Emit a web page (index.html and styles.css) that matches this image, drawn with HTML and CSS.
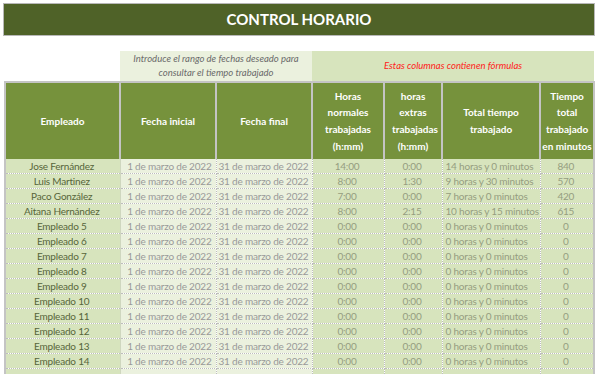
FILE: index.html
```html
<!DOCTYPE html>
<html lang="es">
<head>
<meta charset="utf-8">
<title>Control horario</title>
<link rel="stylesheet" href="styles.css">
</head>
<body>
<div class="sheet">
  <h1 class="title">CONTROL HORARIO</h1>
  <table class="grid">
    <colgroup>
      <col class="c-emp"><col class="c-date"><col class="c-date"><col class="c-hn"><col class="c-he"><col class="c-tot"><col class="c-min">
    </colgroup>
    <thead>
      <tr class="notes">
        <td class="blank"></td>
        <td class="note-input" colspan="2">Introduce el rango de fechas deseado para consultar el tiempo trabajado</td>
        <td class="note-formula" colspan="4">Estas columnas contienen fórmulas</td>
      </tr>
      <tr class="heads">
        <th>Empleado</th>
        <th>Fecha inicial</th>
        <th>Fecha final</th>
        <th class="narrow">Horas normales trabajadas (h:mm)</th>
        <th class="narrow">horas extras trabajadas (h:mm)</th>
        <th>Total tiempo trabajado</th>
        <th>Tiempo total trabajado en&nbsp;minutos</th>
      </tr>
    </thead>
    <tbody>
      <tr><td class="emp">Jose Fernández</td><td class="date">1 de marzo de 2022</td><td class="date">31 de marzo de 2022</td><td class="f">14:00</td><td class="f">0:00</td><td class="f tot">14 horas y 0 minutos</td><td class="f">840</td></tr>
      <tr><td class="emp">Luis Martinez</td><td class="date">1 de marzo de 2022</td><td class="date">31 de marzo de 2022</td><td class="f">8:00</td><td class="f">1:30</td><td class="f tot">9 horas y 30 minutos</td><td class="f">570</td></tr>
      <tr><td class="emp">Paco González</td><td class="date">1 de marzo de 2022</td><td class="date">31 de marzo de 2022</td><td class="f">7:00</td><td class="f">0:00</td><td class="f tot">7 horas y 0 minutos</td><td class="f">420</td></tr>
      <tr><td class="emp">Aitana Hernández</td><td class="date">1 de marzo de 2022</td><td class="date">31 de marzo de 2022</td><td class="f">8:00</td><td class="f">2:15</td><td class="f tot">10 horas y 15 minutos</td><td class="f">615</td></tr>
      <tr><td class="emp">Empleado 5</td><td class="date">1 de marzo de 2022</td><td class="date">31 de marzo de 2022</td><td class="f">0:00</td><td class="f">0:00</td><td class="f tot">0 horas y 0 minutos</td><td class="f">0</td></tr>
      <tr><td class="emp">Empleado 6</td><td class="date">1 de marzo de 2022</td><td class="date">31 de marzo de 2022</td><td class="f">0:00</td><td class="f">0:00</td><td class="f tot">0 horas y 0 minutos</td><td class="f">0</td></tr>
      <tr><td class="emp">Empleado 7</td><td class="date">1 de marzo de 2022</td><td class="date">31 de marzo de 2022</td><td class="f">0:00</td><td class="f">0:00</td><td class="f tot">0 horas y 0 minutos</td><td class="f">0</td></tr>
      <tr><td class="emp">Empleado 8</td><td class="date">1 de marzo de 2022</td><td class="date">31 de marzo de 2022</td><td class="f">0:00</td><td class="f">0:00</td><td class="f tot">0 horas y 0 minutos</td><td class="f">0</td></tr>
      <tr><td class="emp">Empleado 9</td><td class="date">1 de marzo de 2022</td><td class="date">31 de marzo de 2022</td><td class="f">0:00</td><td class="f">0:00</td><td class="f tot">0 horas y 0 minutos</td><td class="f">0</td></tr>
      <tr><td class="emp">Empleado 10</td><td class="date">1 de marzo de 2022</td><td class="date">31 de marzo de 2022</td><td class="f">0:00</td><td class="f">0:00</td><td class="f tot">0 horas y 0 minutos</td><td class="f">0</td></tr>
      <tr><td class="emp">Empleado 11</td><td class="date">1 de marzo de 2022</td><td class="date">31 de marzo de 2022</td><td class="f">0:00</td><td class="f">0:00</td><td class="f tot">0 horas y 0 minutos</td><td class="f">0</td></tr>
      <tr><td class="emp">Empleado 12</td><td class="date">1 de marzo de 2022</td><td class="date">31 de marzo de 2022</td><td class="f">0:00</td><td class="f">0:00</td><td class="f tot">0 horas y 0 minutos</td><td class="f">0</td></tr>
      <tr><td class="emp">Empleado 13</td><td class="date">1 de marzo de 2022</td><td class="date">31 de marzo de 2022</td><td class="f">0:00</td><td class="f">0:00</td><td class="f tot">0 horas y 0 minutos</td><td class="f">0</td></tr>
      <tr><td class="emp">Empleado 14</td><td class="date">1 de marzo de 2022</td><td class="date">31 de marzo de 2022</td><td class="f">0:00</td><td class="f">0:00</td><td class="f tot">0 horas y 0 minutos</td><td class="f">0</td></tr>
      <tr class="empty"><td class="emp"></td><td class="date"></td><td class="date"></td><td class="f"></td><td class="f"></td><td class="f tot"></td><td class="f"></td></tr>
    </tbody>
  </table>
</div>
</body>
</html>
```
FILE: styles.css
```css
html, body {
  margin: 0;
  padding: 0;
  background: #ffffff;
}
body {
  font-family: Lato, "Open Sans", sans-serif;
  font-size: 10px;
  overflow: hidden;
}
.sheet {
  padding: 3px 0 0 3px;
  width: 592px;
}
.title {
  margin: 0;
  height: 31px;
  line-height: 31px;
  background: #4f6228;
  border: 1px solid #b8b8b8;
  color: #ffffff;
  font-size: 15px;
  font-weight: 700;
  text-align: center;
}
.grid {
  margin-top: 15px;
  margin-left: 1px;
  border-collapse: collapse;
  table-layout: fixed;
  width: 589px;
}
.c-emp { width: 115px; }
.c-date { width: 96px; }
.c-hn { width: 72px; }
.c-he { width: 58px; }
.c-tot { width: 98px; }
.c-min { width: 54px; }

.notes td {
  height: 30px;
  padding: 0 6px;
  font-style: italic;
  font-size: 9.5px;
  text-align: center;
  line-height: 14px;
}
.notes .blank { background: #ffffff; }
.note-input {
  background: #ebf1de;
  color: #6a6a6a;
}
.note-formula {
  background: #d7e4bd;
  color: #ff1a1a;
}
.heads th {
  background: #76923c;
  color: #ffffff;
  font-weight: 700;
  font-size: 10px;
  line-height: 16.6px;
  height: 76px;
  padding: 0;
  border: 2px solid #c4c4c4;
  border-bottom: 0;
  vertical-align: middle;
}
.heads th.narrow { padding: 0 7px; }
tbody td {
  height: 14px;
  padding: 0 4px 0 2px;
  line-height: 14px;
  white-space: nowrap;
  overflow: hidden;
  letter-spacing: -0.2px;
  border-bottom: 1px dotted #bdbdbd;
  border-right: 1px dotted #bdbdbd;
}
tbody td:first-child { border-left: 2px solid #c4c4c4; }
tbody td:last-child { border-right: 2px solid #c4c4c4; }
.emp {
  background: #d7e4bd;
  color: #56653a;
  text-align: center;
  border-right: 1px solid #cfd7bf;
}
.date {
  background: #ebf1de;
  color: #999999;
  text-align: right;
}
.f {
  background: #d7e4bd;
  color: #959d80;
  text-align: center;
}
.f.tot { text-align: left; padding-left: 3px; padding-right: 0; }
```
